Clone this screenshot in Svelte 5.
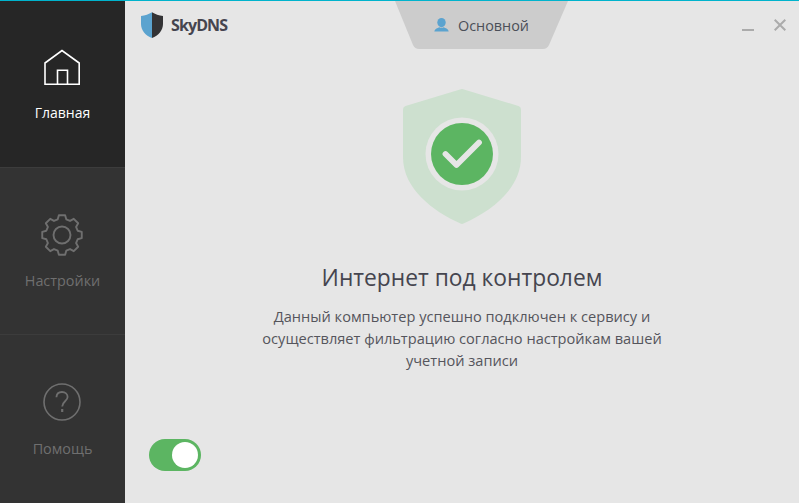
<script>
  const nav = [
    { id: 'home', label: 'Главная', active: true },
    { id: 'gear', label: 'Настройки', active: false },
    { id: 'help', label: 'Помощь', active: false }
  ];

  function gearPath(cx, cy, inner, outer, teeth) {
    const pts = [];
    const step = 360 / teeth;
    for (let i = 0; i < teeth; i++) {
      const a = i * step - 90;
      [[-step * 0.34, inner], [-step * 0.2, outer], [step * 0.2, outer], [step * 0.34, inner]].forEach(([d, r]) => {
        const t = ((a + d) * Math.PI) / 180;
        pts.push(`${(cx + r * Math.cos(t)).toFixed(2)} ${(cy + r * Math.sin(t)).toFixed(2)}`);
      });
    }
    return 'M' + pts.join(' L') + ' Z';
  }
  const gear = gearPath(21, 21, 16.2, 20, 8);
</script>

<div class="window">
  <aside class="sidebar">
    {#each nav as item}
      <div class="nav-item {item.id}" class:active={item.active}>
        <div class="nav-icon">
          {#if item.id === 'home'}
            <svg width="38" height="38" viewBox="0 0 38 38" fill="none" stroke="#fff" stroke-width="1.6">
              <path d="M2 15 L19 2.5 L36.2 15 V36.2 H2 Z" />
              <path d="M14.5 36.2 V22.3 H24.5 V36.2" />
            </svg>
          {:else if item.id === 'gear'}
            <svg width="42" height="42" viewBox="0 0 42 42" fill="none" stroke="#6f6f6f" stroke-width="1.9">
              <path d={gear} stroke-linejoin="round" />
              <circle cx="21" cy="21" r="8.5" />
            </svg>
          {:else}
            <svg width="38" height="38" viewBox="0 0 38 38" fill="none" stroke="#6f6f6f" stroke-width="1.6">
              <circle cx="19" cy="19" r="18" />
              <path d="M13.4 14.2 C13.6 10.8 16 9 19 9 C22.2 9 24.6 11 24.6 14 C24.6 18 19.2 18.6 19.2 23.4" stroke-width="1.8" />
              <path d="M19.2 26 V29" stroke-width="2.2" />
            </svg>
          {/if}
        </div>
        <div class="nav-label">{item.label}</div>
      </div>
    {/each}
  </aside>

  <main class="content">
    <header class="topbar">
      <div class="logo">
        <svg width="24" height="26" viewBox="0 0 24 26">
          <path d="M12 0.2 C9 2.2 5 3.4 1 4 V12 C1 18.5 5.5 23.5 12 25.9 Z" fill="#5ba3cf" />
          <path d="M12 0.2 C15 2.2 19 3.4 23 4 V12 C23 18.5 18.5 23.5 12 25.9 Z" fill="#333335" />
        </svg>
        <span class="brand">SkyDNS</span>
      </div>

      <div class="profile">
        <svg width="15" height="14" viewBox="0 0 15 14" fill="#5ba3cf">
          <ellipse cx="7.5" cy="4.6" rx="4.2" ry="4.6" />
          <path d="M0.3 13.6 C0.5 11 3 10 5.4 9.2 C6.6 10 8.4 10 9.6 9.2 C12 10 14.5 11 14.7 13.6 Z" />
        </svg>
        <span>Основной</span>
      </div>

      <div class="win-controls">
        <span class="minimize"></span>
        <svg width="12" height="12" viewBox="0 0 12 12" stroke="#ababab" stroke-width="2" fill="none">
          <path d="M0.7 0.7 L11.3 11.3 M11.3 0.7 L0.7 11.3" />
        </svg>
      </div>
    </header>

    <section class="status">
      <svg class="shield" width="118" height="135" viewBox="0 0 118 135">
        <path d="M59 0 Q60 0 61 0.4 L115.5 17 Q118 17.8 118 20.5 V68 C118 100 88 122 60.5 134.6 Q59 135.2 57.5 134.6 C30 122 0 100 0 68 V20.5 Q0 17.8 2.5 17 L57 0.4 Q58 0 59 0 Z" fill="#cde0cf" />
        <circle cx="59" cy="65" r="36.5" fill="#e6e6e6" />
        <circle cx="59" cy="65" r="31" fill="#5cb562" />
        <path d="M42.5 65 L53.5 76 L76 53.5" fill="none" stroke="#e6e6e6" stroke-width="5.8" stroke-linecap="round" stroke-linejoin="round" />
      </svg>
      <h1>Интернет под контролем</h1>
      <p>Данный компьютер успешно подключен к сервису и осуществляет фильтрацию согласно настройкам вашей учетной записи</p>
    </section>

    <div class="toggle"><span class="knob"></span></div>
  </main>
</div>

<style>
  :global(body) {
    margin: 0;
  }
  .window {
    width: 799px;
    height: 503px;
    display: flex;
    box-sizing: border-box;
    border-top: 1px solid #00b3cc;
    background: #e6e6e6;
    font-family: "Open Sans", "Noto Sans", sans-serif;
    overflow: hidden;
  }
  .sidebar {
    width: 125px;
    flex: none;
    display: flex;
    flex-direction: column;
    background: #333;
  }
  .nav-item {
    height: 168px;
    box-sizing: border-box;
    display: flex;
    flex-direction: column;
    align-items: center;
    border-bottom: 1px solid #3c3c3c;
    color: #6f6f6f;
  }
  .nav-item:first-child {
    height: 167px;
  }
  .nav-item:last-child {
    border-bottom: 0;
  }
  .nav-item.active {
    background: #262626;
    color: #fff;
  }
  .nav-icon {
    display: flex;
    align-items: center;
    justify-content: center;
    margin-right: 1px;
  }
  .home .nav-icon {
    margin-top: 47px;
    height: 38px;
  }
  .gear .nav-icon {
    margin-top: 46px;
    height: 42px;
  }
  .help .nav-icon {
    margin-top: 47px;
    height: 40px;
  }
  .nav-label {
    font-size: 14.4px;
    line-height: 20px;
  }
  .home .nav-label {
    margin-top: 17px;
    font-size: 14px;
  }
  .gear .nav-label {
    margin-top: 15px;
  }
  .help .nav-label {
    margin-top: 17px;
  }
  .content {
    flex: 1;
    position: relative;
    display: flex;
    flex-direction: column;
  }
  .topbar {
    height: 48px;
    flex: none;
    display: flex;
    align-items: flex-start;
    position: relative;
  }
  .logo {
    display: flex;
    align-items: center;
    gap: 7px;
    margin: 11px 0 0 15px;
  }
  .brand {
    font-size: 16px;
    font-weight: 700;
    color: #45454f;
    letter-spacing: -0.9px;
    line-height: 26px;
  }
  .profile {
    position: absolute;
    left: 270px;
    top: 0;
    width: 173px;
    height: 48px;
    box-sizing: border-box;
    background: #cccccc;
    clip-path: path("M0 0 H173 L154 44 Q152 48 148 48 H24 Q20 48 18 44 Z");
    display: flex;
    align-items: center;
    justify-content: center;
    gap: 9px;
    font-size: 14.4px;
    color: #4b4f58;
  }
  .win-controls {
    position: absolute;
    right: 13px;
    top: 18px;
    display: flex;
    align-items: flex-end;
    gap: 20px;
  }
  .minimize {
    width: 12px;
    height: 2px;
    background: #ababab;
  }
  .status {
    display: flex;
    flex-direction: column;
    align-items: center;
    padding-top: 40px;
  }
  .shield {
    display: block;
  }
  h1 {
    margin: 39px 0 0;
    font-size: 22.8px;
    font-weight: 400;
    line-height: 30px;
    color: #45454f;
  }
  p {
    margin: 12px 0 0;
    width: 420px;
    font-size: 14.6px;
    line-height: 22px;
    text-align: center;
    color: #55555c;
  }
  .toggle {
    position: absolute;
    left: 24px;
    top: 438px;
    width: 52px;
    height: 32px;
    border-radius: 16px;
    background: #5cb562;
  }
  .knob {
    position: absolute;
    right: 3px;
    top: 3px;
    width: 26px;
    height: 26px;
    border-radius: 50%;
    background: #fff;
  }
</style>
